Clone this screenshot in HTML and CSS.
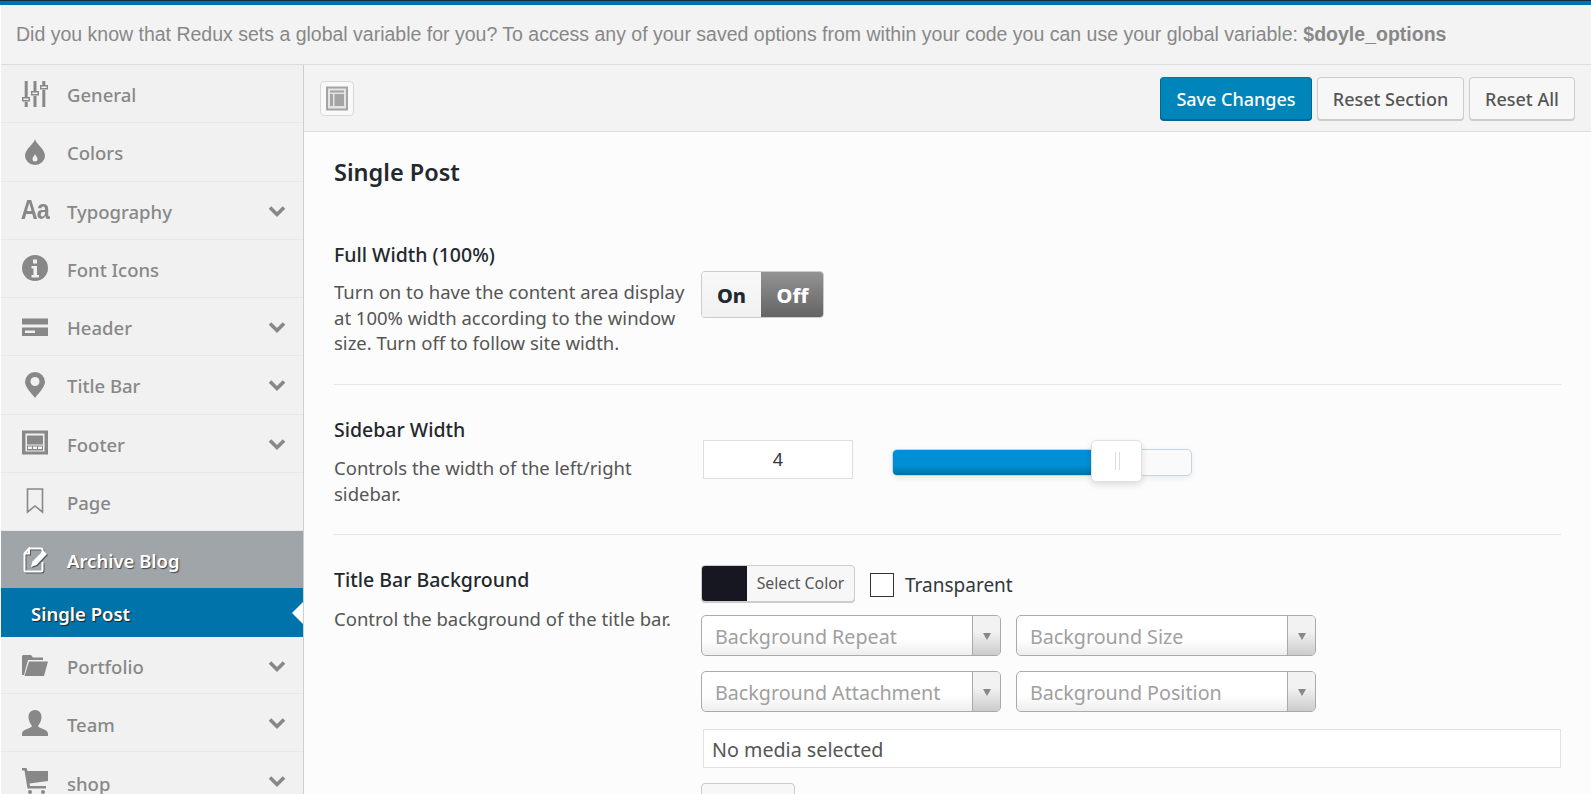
FILE: index.html
```html
<!DOCTYPE html>
<html lang="en">
<head>
<meta charset="utf-8">
<title>Theme Options</title>
<link rel="stylesheet" href="styles.css">
</head>
<body>
<div class="page">
  <div class="notice"><p>Did you know that Redux sets a global variable for you? To access any of your saved options from within your code you can use your global variable: <strong>$doyle_options</strong></p></div>
  <div class="layout">
    <nav class="sidebar">
      <a class="item"><span class="ico"><svg viewBox="0 0 26 26"><path class="f" d="M2.700 0h3v16h-3zM2.700 21h3v5h-3zM11.500 0h3v10h-3zM11.500 15h3v11h-3zM20.300 0h3v4h-3zM20.300 9h3v17h-3z"/><path class="o" d="M.7 16.700h6.600v3H.7zM9.700 10.700h6.600v3H9.700zM18.700 4.700h6.600v3h-6.600z"/></svg></span><span class="lbl">General</span></a>
      <a class="item"><span class="ico"><svg viewBox="0 0 26 26"><path class="f" d="M13 0c1 5 10 10 10 17a10 9 0 0 1-20 0C3 10 12 5 13 0z"/><path class="w" d="M13 15c.5 2 2.500 3 2.500 5a2.500 2.500 0 0 1-5 0c0-2 2-3 2.500-5z"/></svg></span><span class="lbl">Colors</span></a>
      <a class="item"><span class="ico"><span class="aa">Aa</span></span><span class="lbl">Typography</span><svg class="chev" viewBox="0 0 18 13"><path d="M2 2.500l7 7 7-7"/></svg></a>
      <a class="item"><span class="ico"><svg viewBox="0 0 26 26"><circle class="f" cx="13" cy="13" r="13"/><path class="w" d="M11 4.500h4v4h-4zM9.500 11h5.500v9h2v2.500H9.500V20h2v-6.500h-2z"/></svg></span><span class="lbl">Font Icons</span></a>
      <a class="item"><span class="ico"><svg viewBox="0 0 26 26"><path class="f" d="M0 4.500h26v6H0zM0 13.500h26v8.500H0z"/><path class="w" d="M3 16.500h10v2.500H3z"/></svg></span><span class="lbl">Header</span><svg class="chev" viewBox="0 0 18 13"><path d="M2 2.500l7 7 7-7"/></svg></a>
      <a class="item"><span class="ico"><svg viewBox="0 0 26 26"><path class="f" d="M13 0a10 10 0 0 1 10 10c0 5-7 12-10 16C10 22 3 15 3 10A10 10 0 0 1 13 0z"/><circle class="w" cx="13" cy="9.500" r="4.500"/></svg></span><span class="lbl">Title Bar</span><svg class="chev" viewBox="0 0 18 13"><path d="M2 2.500l7 7 7-7"/></svg></a>
      <a class="item"><span class="ico"><svg viewBox="0 0 26 26"><path class="f" d="M0 .5h26v24H0z"/><path class="w" d="M3.500 3.500h19v18h-19z"/><path class="f" d="M5 5.500h16v9H5zM5 15.500h16v5H5z"/><path class="w" d="M6 16.500h4v2.500H6zM11 16.500h4v2.500h-4zM16 16.500h4v2.500h-4z"/></svg></span><span class="lbl">Footer</span><svg class="chev" viewBox="0 0 18 13"><path d="M2 2.500l7 7 7-7"/></svg></a>
      <a class="item"><span class="ico"><svg viewBox="0 0 26 26"><path class="o2" d="M5.500 1h15v23l-7.500-6-7.500 6z"/></svg></span><span class="lbl">Page</span></a>
      <a class="item open"><span class="ico"><svg class="shadow" viewBox="0 0 26 26"><path class="wl" d="M7 1.500h12c1 0 1.500.5 1.500 1.500v4M20.500 15v8c0 1-.5 1.500-1.500 1.500H4c-1 0-1.500-.5-1.500-1.500V6.500L7 1.500v5H2.500"/><path class="wf" d="M21.500 3.500l3.500 3.500L14.500 18l-5.500 2 1.500-5.500z"/></svg></span><span class="lbl">Archive Blog</span></a>
      <a class="sub">Single Post</a>
      <a class="item short"><span class="ico"><svg viewBox="0 0 26 26"><path class="f" d="M1 3h8l2 2.500h10v2.500H6L2 23H0V4z"/><path class="f" d="M7 9.500h19L22 24H2.500z"/></svg></span><span class="lbl">Portfolio</span><svg class="chev" viewBox="0 0 18 13"><path d="M2 2.500l7 7 7-7"/></svg></a>
      <a class="item low"><span class="ico"><svg viewBox="0 0 26 26"><path class="f" d="M13 0c4 0 6.500 3 6.500 7s-2 7-3.500 9c0 2.500 10 3 10 7.500V26H0v-2.500C0 19 10 18.500 10 16c-1.500-2-3.500-5-3.500-9S9 0 13 0z"/></svg></span><span class="lbl">Team</span><svg class="chev" viewBox="0 0 18 13"><path d="M2 2.500l7 7 7-7"/></svg></a>
      <a class="item lower"><span class="ico"><svg viewBox="0 0 26 26"><path class="f" d="M0 0h4.500l1 3H26v10L7.500 15.500l.5 2.500h16v2.500H5.500L2.500 2.500H0z"/><circle class="f" cx="8" cy="24" r="2"/><circle class="f" cx="21" cy="24" r="2"/></svg></span><span class="lbl">shop</span><svg class="chev" viewBox="0 0 18 13"><path d="M2 2.500l7 7 7-7"/></svg></a>
    </nav>
    <main class="main">
      <div class="toolbar">
        <span class="expand"><svg viewBox="0 0 22 24"><path class="e1" d="M0 0h22v24H0z"/><path class="e2" d="M2 2h18v20H2z"/><path class="e1" d="M4 4h14v2H4zM4 7.500h3v12H4zM8.500 7.500h9.500v12H8.500z"/></svg></span>
        <span class="actions">
          <button class="btn primary">Save Changes</button>
          <button class="btn">Reset Section</button>
          <button class="btn">Reset All</button>
        </span>
      </div>
      <div class="content">
        <h2 class="title">Single Post</h2>
        <section class="row r1">
          <div class="info">
            <h3 class="label">Full Width (100%)</h3>
            <p class="desc">Turn on to have the content area display at 100% width according to the window size. Turn off to follow site width.</p>
          </div>
          <div class="control">
            <div class="toggle"><span class="on">On</span><span class="off">Off</span></div>
          </div>
        </section>
        <section class="row r2">
          <div class="info">
            <h3 class="label">Sidebar Width</h3>
            <p class="desc">Controls the width of the left/right sidebar.</p>
          </div>
          <div class="control slide-control">
            <div class="numbox">4</div>
            <div class="slider"><div class="fill"></div><div class="handle"></div></div>
          </div>
        </section>
        <section class="row r3">
          <div class="info">
            <h3 class="label">Title Bar Background</h3>
            <p class="desc">Control the background of the title bar.</p>
          </div>
          <div class="control stack">
            <div class="color-row">
              <div class="color"><span class="swatch"></span><span class="ctext">Select Color</span></div>
              <span class="check"></span><span class="ctlabel">Transparent</span>
            </div>
            <div class="selects">
              <div class="select"><span>Background Repeat</span><i class="arrow"></i></div>
              <div class="select"><span>Background Size</span><i class="arrow"></i></div>
              <div class="select"><span>Background Attachment</span><i class="arrow"></i></div>
              <div class="select"><span>Background Position</span><i class="arrow"></i></div>
            </div>
            <div class="media">No media selected</div>
            <div class="upload"></div>
          </div>
        </section>
      </div>
    </main>
  </div>
</div>
</body>
</html>
```
FILE: styles.css
```css
* { box-sizing: border-box; }
html, body { margin: 0; height: 100%; overflow: hidden; background: #fff; }
body { font-family: "Noto Sans", "Open Sans", sans-serif; color: #23282d; }
.page { width: 1591px; height: 794px; overflow: hidden; border-top: 1px solid #12303f; padding-left: 1px; display: flex; flex-direction: column; position: relative; }
.page::before { content: ""; height: 4px; background: #0073aa; margin-left: -1px; flex: none; }
.notice { flex: none; height: 60px; padding: 0 15px; display: flex; align-items: center; font: 19.5px "Liberation Sans", Arial, sans-serif; color: #888; background: #f3f3f3; border-bottom: 1px solid #dcdcdc; }
.notice p { margin: 0; white-space: nowrap; }
.notice strong { font-weight: 700; }
.layout { display: flex; flex: 1; min-height: 0; }
.sidebar { flex: none; width: 303px; background: #f1f1f1; border-right: 1px solid #cfcfcf; display: flex; flex-direction: column; }
.item { flex: none; height: 58.25px; display: flex; align-items: center; padding: 0 17px 0 21px; border-bottom: 1px solid #e7e7e7; color: #888; }
.short { height: 57px; }
.ico { width: 26px; height: 26px; flex: none; display: flex; align-items: center; justify-content: center; }
.ico svg { width: 26px; height: 26px; display: block; }
.aa { font: 700 28px/26px "Liberation Sans", Arial, sans-serif; color: #888; letter-spacing: -1px; transform: scaleX(.84); }
.lbl { flex: 1; margin-left: 19px; padding-top: 3px; font-size: 18.5px; font-weight: 500; line-height: 26px; white-space: nowrap; }
.low .lbl { padding-top: 5px; }
.lower .lbl { padding-top: 7px; }
.chev { width: 18px; height: 13px; flex: none; margin-top: 2px; }
.chev path { fill: none; stroke: #888; stroke-width: 3.6; }
.f { fill: #888; }
.w { fill: #f1f1f1; }
.o { fill: #f1f1f1; stroke: #888; stroke-width: 1.4; }
.o2 { fill: none; stroke: #888; stroke-width: 1.6; }
.open { background: #a0a5aa; color: #fff; border-bottom: 0; height: 57px; text-shadow: 1px 1px 1px #444; }
.open .lbl { font-weight: 600; padding-top: 2px; }
.shadow { filter: drop-shadow(1px 1px 0 #555); }
.wl { fill: none; stroke: #fff; stroke-width: 2; }
.wf { fill: #fff; }
.sub { flex: none; position: relative; height: 49px; padding-top: 2px; display: flex; align-items: center; padding-left: 30px; background: #0073aa; color: #fff; font-size: 18.5px; font-weight: 600; text-shadow: 1px 1px 1px #222; }
.sub::after { content: ""; position: absolute; right: 0; top: 14px; border: 11px solid transparent; border-left: 0; border-right-color: #fff; }
.main { flex: 1; min-width: 0; background: #fcfcfc; display: flex; flex-direction: column; }
.toolbar { flex: none; height: 67px; display: flex; align-items: center; justify-content: space-between; padding: 0 16px; background: #f3f3f3; border-bottom: 1px solid #dedede; }
.expand { width: 34px; height: 35px; padding: 4px 5px; background: #f9f9f9; border: 1px solid #d9d9d9; border-radius: 4px; display: block; }
.expand svg { display: block; width: 22px; height: 25px; }
.e1 { fill: #a4a4a4; }
.e2 { fill: #e4e4e4; }
.actions { display: flex; gap: 5px; }
.btn { height: 43px; padding: 2px 0 0; font: 500 18px "Noto Sans", "Open Sans", sans-serif; white-space: nowrap; color: #555; background: #f7f7f7; border: 1px solid #ccc; border-radius: 4px; box-shadow: 0 1px 0 #ccc; }
.primary { width: 152px; background: #0085ba; border-color: #0073aa #006799 #006799; box-shadow: 0 1px 0 #006799; color: #fff; }
.btn:nth-child(2) { width: 147px; }
.btn:nth-child(3) { width: 106px; }
.content { flex: 1; padding: 0 30px; }
.title { margin: 0; padding-top: 24px; height: 77px; font-size: 23.5px; line-height: 32px; font-weight: 600; color: #23282d; }
.row { display: grid; grid-template-columns: 367px 1fr; border-bottom: 1px solid #e5e5e5; }
.r1 { height: 176px; padding-top: 32px; }
.r2 { height: 150px; padding-top: 31px; }
.r3 { padding-top: 31px; border-bottom: 0; }
.info { width: 362px; }
.label { margin: 0; padding-top: 1px; font-size: 19.5px; line-height: 26px; font-weight: 500; color: #23282d; }
.desc { margin: 11px 0 0; font-size: 18.5px; line-height: 25.5px; color: #555; }
.r2 .desc { width: 340px; margin-top: 12px; }
.r3 .desc { margin-top: 13px; }
.toggle { margin-top: 30px; width: 123px; height: 47px; display: flex; border: 1px solid #ccc; border-radius: 4px; overflow: hidden; font-weight: 800; font-size: 20px; }
.on { width: 59px; padding-top: 1px; display: flex; align-items: center; justify-content: center; background: linear-gradient(#f8f8f8, #f1f1f1); color: #23282d; }
.off { flex: 1; padding-top: 1px; margin: -1px -1px -1px 0; display: flex; align-items: center; justify-content: center; background: linear-gradient(#949494, #636363); color: #fff; }
.slide-control { display: flex; align-items: flex-start; padding: 24px 0 0 2px; }
.numbox { width: 150px; height: 39px; padding-bottom: 1px; display: flex; align-items: center; justify-content: center; background: #fff; border: 1px solid #ddd; font-size: 18px; color: #32373c; }
.slider { position: relative; width: 300px; height: 27px; margin: 9px 0 0 39px; background: #fafafa; border: 1px solid #c3d4e2; border-radius: 5px; box-shadow: 0 2px 6px rgba(0,0,0,.08); }
.fill { width: 199px; height: 100%; background: linear-gradient(#008fd5 60%, #0072a6); border-radius: 4px 0 0 4px; }
.handle { position: absolute; left: 198px; top: -10px; width: 51px; height: 42px; background: #fff; background-image: linear-gradient(#ddd, #ddd), linear-gradient(#ddd, #ddd); background-size: 1px 18px; background-position: 23px 11px, 27px 11px; background-repeat: no-repeat; border: 1px solid #e2e2e2; border-radius: 5px; box-shadow: 0 3px 6px rgba(0,0,0,.12); }
.stack { display: flex; flex-direction: column; margin-top: -1px; }
.color-row { display: flex; align-items: center; height: 37px; }
.color { width: 154px; height: 37px; display: flex; border: 1px solid #ccc; border-radius: 4px; overflow: hidden; background: #f7f7f7; box-shadow: 0 1px 0 #ccc; }
.swatch { width: 45px; background: #171722; }
.ctext { flex: 1; text-align: center; font-size: 15.8px; line-height: 35px; color: #555; white-space: nowrap; }
.check { width: 24px; height: 24px; margin: 2px 11px 0 15px; background: #fff; border: 1px solid #333; }
.ctlabel { font-size: 19px; color: #32373c; margin-top: 3px; }
.selects { display: grid; grid-template-columns: 300px 300px; gap: 15px 15px; margin-top: 13px; }
.select { position: relative; height: 41px; padding: 2px 13px 0; display: flex; align-items: center; font-size: 19.7px; color: #a0a0a0; white-space: nowrap; background: linear-gradient(#fff 60%, #eee); border: 1px solid #aaa; border-radius: 5px; }
.arrow { position: absolute; right: 0; top: 0; bottom: 0; width: 28px; border-left: 1px solid #aaa; background: linear-gradient(#f2f2f2 40%, #ccc); border-radius: 0 4px 4px 0; }
.arrow::after { content: ""; position: absolute; left: 10px; top: 17px; border: 4px solid transparent; border-top: 7px solid #888; border-bottom: 0; }
.media { width: 858px; height: 39px; margin: 17px 0 0 2px; padding: 2px 8px 0; display: flex; align-items: center; background: #fff; border: 1px solid #e2e2e2; font-size: 19.7px; color: #555; }
.upload { width: 94px; height: 40px; margin-top: 15px; background: #f7f7f7; border: 1px solid #ccc; border-radius: 4px; }
```
